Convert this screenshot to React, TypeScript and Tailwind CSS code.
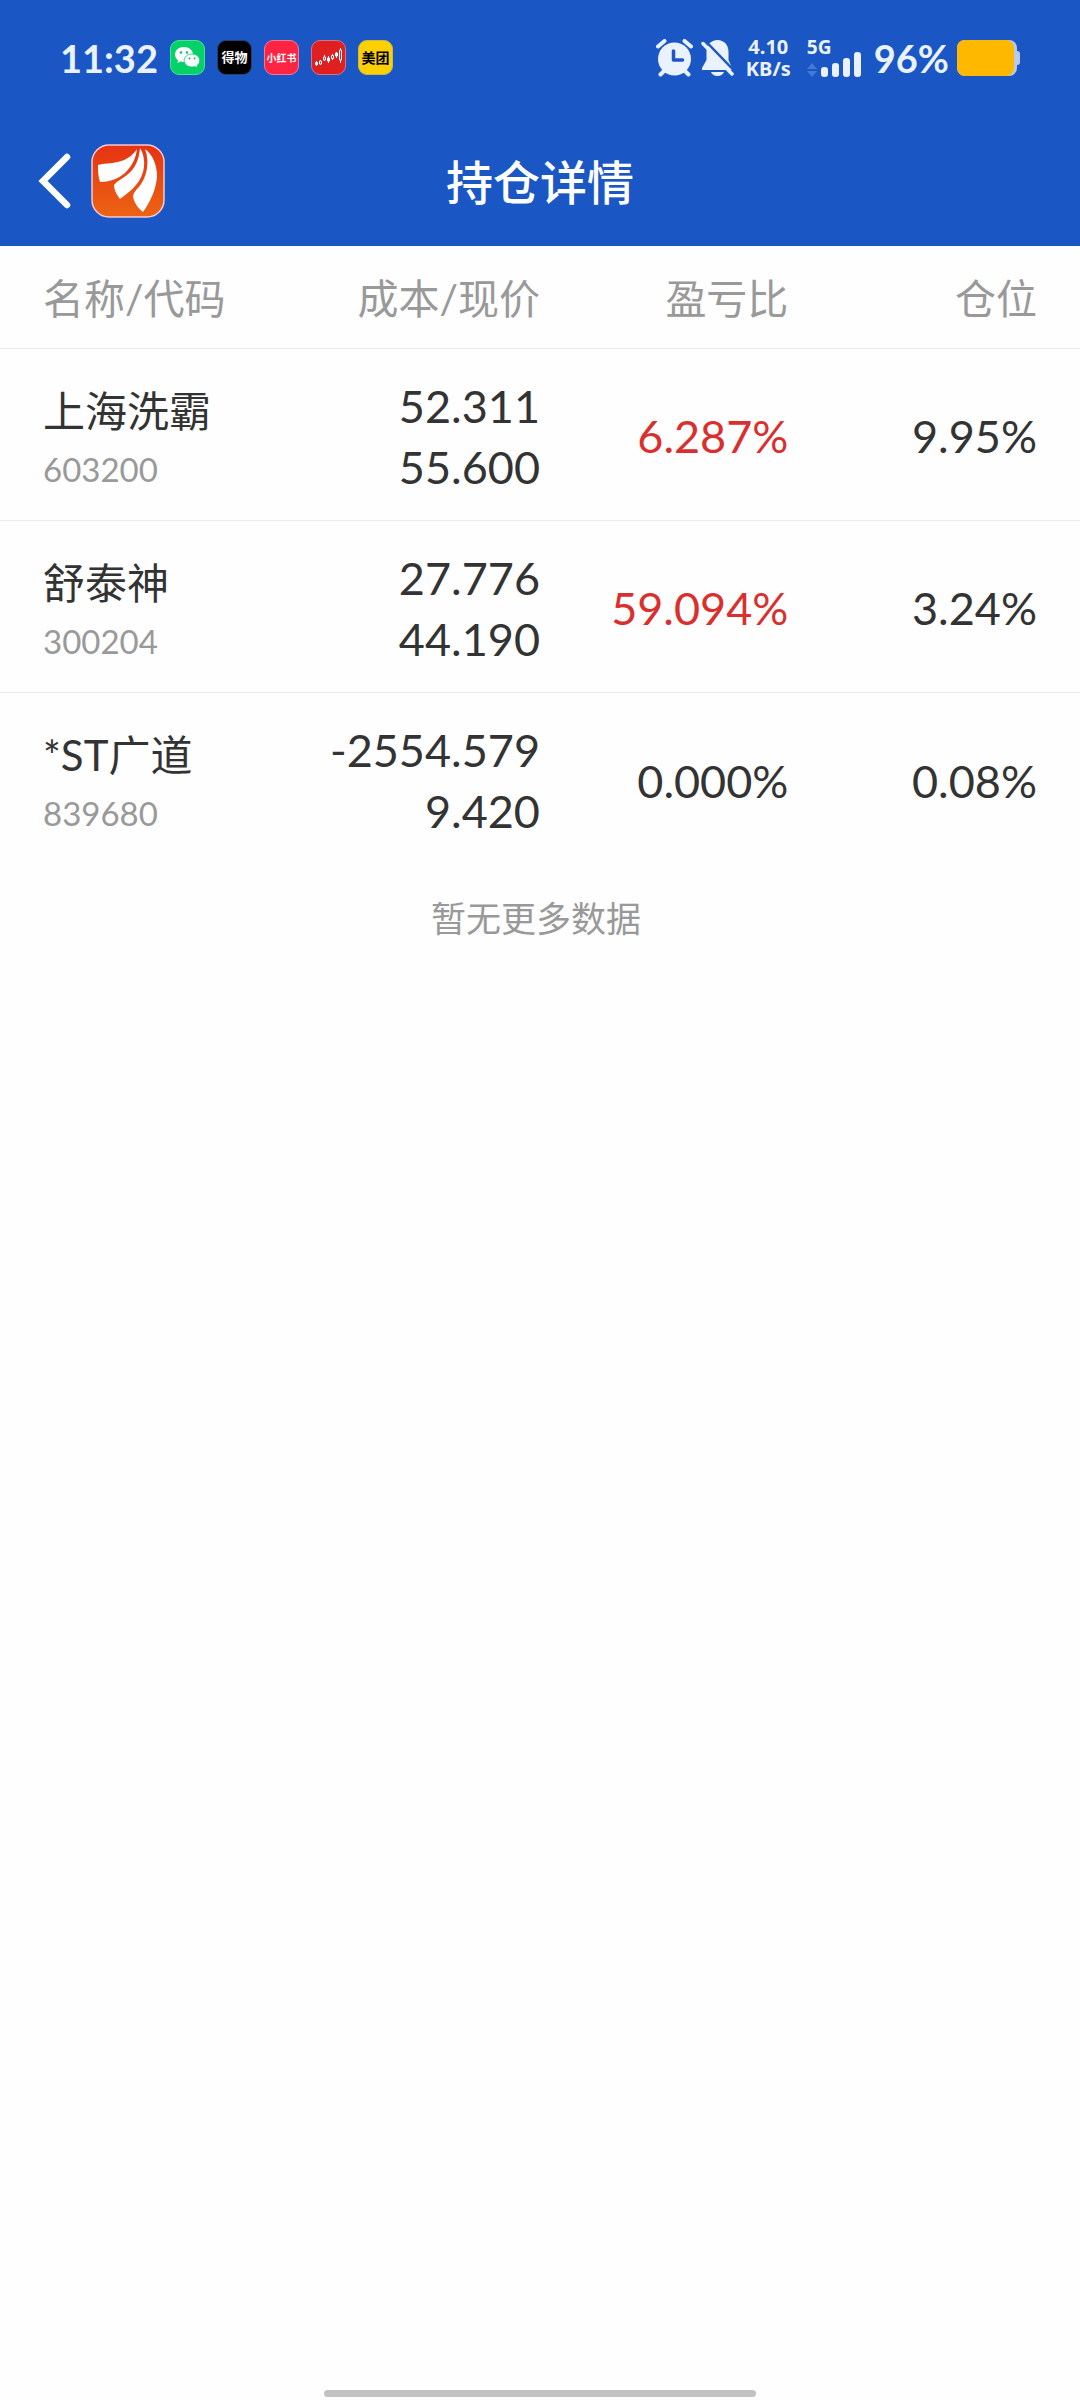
import { ReactNode } from 'react'

interface Holding {
  name: string
  code: string
  cost: string
  price: string
  ratio: string
  position: string
  gain: boolean
}

const holdings: Holding[] = [
  { name: '上海洗霸', code: '603200', cost: '52.311', price: '55.600', ratio: '6.287%', position: '9.95%', gain: true },
  { name: '舒泰神', code: '300204', cost: '27.776', price: '44.190', ratio: '59.094%', position: '3.24%', gain: true },
  { name: '*ST广道', code: '839680', cost: '-2554.579', price: '9.420', ratio: '0.000%', position: '0.08%', gain: false },
]

export default function App() {
  return (
    <div className="flex min-h-screen flex-col bg-[#fefefe] font-[Lato,'Noto_Sans_CJK_SC',sans-serif] text-[#333333]">
      <header className="bg-[#1a57c4] text-white">
        <StatusBar />
        <NavBar />
      </header>

      <main className="flex-1">
        <HoldingsTable />
        <p className="pt-7 pr-2 text-center text-[35px] leading-[52px] text-[#999999]">暂无更多数据</p>
      </main>

      <footer className="flex justify-center pb-[3px]">
        <div className="h-[7px] w-2/5 rounded-full bg-[#c2c2c2]" />
      </footer>
    </div>
  )
}

function StatusBar() {
  return (
    <div className="flex h-[115px] items-center justify-between px-[60px] text-[#eaf1ff]">
      <div className="flex items-center gap-3">
        <span className="text-[38px] leading-none font-bold">11:32</span>
        <AppBadge className="border-[#4fe08d] bg-[#06d168]">
          <WeChatIcon />
        </AppBadge>
        <AppBadge className="border-[#2b3f68] bg-black text-[13px] text-white">得物</AppBadge>
        <AppBadge className="border-[#f0789a] bg-[#ff2442] text-[10px] text-white">小红书</AppBadge>
        <AppBadge className="border-[#d8708c] bg-[#e02020]">
          <CandlesIcon />
        </AppBadge>
        <AppBadge className="border-[#c9b94a] bg-[#ffd000] text-[14px] text-black">美团</AppBadge>
      </div>

      <div className="flex items-center">
        <AlarmIcon />
        <BellOffIcon />
        <div className="ml-3 text-center font-['Noto_Sans',sans-serif] text-[20px] leading-[22px] font-bold">
          <div>4.10</div>
          <div>KB/s</div>
        </div>
        <SignalIcon />
        <span className="ml-3 text-[38px] leading-none font-bold">96%</span>
        <BatteryIcon />
      </div>
    </div>
  )
}

function AppBadge({ className, children }: { className: string; children: ReactNode }) {
  return (
    <span
      className={`flex size-[35px] items-center justify-center overflow-hidden rounded-[9px] border leading-none font-bold whitespace-nowrap ${className}`}
    >
      {children}
    </span>
  )
}

function NavBar() {
  return (
    <nav className="grid h-[131px] grid-cols-[1fr_auto_1fr] items-center px-[38px]">
      <div className="flex items-center gap-5">
        <button type="button" aria-label="返回">
          <svg width="33" height="56" viewBox="0 0 33 56" fill="none">
            <path d="M29 4L5 28l24 24" stroke="#fff" strokeWidth="6.5" strokeLinecap="round" strokeLinejoin="miter" />
          </svg>
        </button>
        <BrandLogo />
      </div>
      <h1 className="pt-1 text-[47px] leading-none font-medium">持仓详情</h1>
    </nav>
  )
}

function HoldingsTable() {
  return (
    <table className="w-full table-fixed border-collapse">
      <thead>
        <tr className="h-[102px] border-b border-[#ebebeb] text-[41px] leading-none text-[#999999]">
          <th scope="col" className="w-[27%] pt-1 pl-[43px] text-left font-normal">名称/代码</th>
          <th scope="col" className="w-[23%] pt-1 text-right font-normal whitespace-nowrap">成本/现价</th>
          <th scope="col" className="w-[23%] pt-1 text-right font-normal">盈亏比</th>
          <th scope="col" className="w-[27%] pt-1 pr-[43px] text-right font-normal">仓位</th>
        </tr>
      </thead>
      <tbody>
        {holdings.map((item) => (
          <tr key={item.code} className="h-[172px] border-b border-[#ebebeb] text-[45px] last:border-0">
            <td className="pt-3 pl-[43px]">
              <div className="text-[42px] leading-[58px]">{item.name}</div>
              <div className="text-[33px] leading-[58px] text-[#999999]">{item.code}</div>
            </td>
            <td className="pt-1.5 text-right leading-[61px]">
              <div>{item.cost}</div>
              <div>{item.price}</div>
            </td>
            <td className={item.gain ? 'pt-1.5 text-right text-[#d9302f]' : 'pt-1.5 text-right'}>{item.ratio}</td>
            <td className="pt-1.5 pr-[43px] text-right">{item.position}</td>
          </tr>
        ))}
      </tbody>
    </table>
  )
}

function BrandLogo() {
  return (
    <svg width="74" height="74" viewBox="0 0 74 74">
      <defs>
        <linearGradient id="brand" x1="0" y1="0" x2="0" y2="1">
          <stop offset="0" stopColor="#e63312" />
          <stop offset="1" stopColor="#ec6413" />
        </linearGradient>
      </defs>
      <rect x="1" y="1" width="72" height="72" rx="17" fill="url(#brand)" stroke="#f3c9d2" strokeWidth="1.5" />
      <path d="M46 5C42 11 36 16 27 18C19 20 13 19 7 21C7 27 7 32 9 38C18 38 27 35 34 29C41 22 45 14 46 5Z" fill="#fff" />
      <path d="M49 4C48 16 44 25 36 31C31 35 26 37 23 41C23 46 26 51 29 55C34 51 40 47 45 41C54 31 56 15 49 4Z" fill="#fff" />
      <path d="M54 5C59 18 56 33 48 43C45 46 43 48 42 52C43 59 47 64 52 68C59 58 65 46 66 33C66 21 62 11 54 5Z" fill="#fff" />
    </svg>
  )
}

function WeChatIcon() {
  return (
    <svg width="27" height="23" viewBox="0 0 27 23">
      <path d="M10 1C4.600 1 1 4.500 1 8.500c0 2.500 1.300 4.500 3.200 5.900L3.400 17l3.200-1.600c1 .3 2.200.5 3.400.5 5 0 9-3.200 9-7.400S15 1 10 1Z" fill="#fff" />
      <path d="M18 8c-4.500 0-7.800 2.900-7.800 6.500S13.500 21 18 21c1 0 2-.2 2.800-.4l2.700 1.400-.7-2.200c1.700-1.200 2.900-3.100 2.900-5.300C25.700 10.900 22.500 8 18 8Z" fill="#fff" stroke="#06d168" strokeWidth=".8" />
      <circle cx="7" cy="6.500" r="1.200" fill="#06c160" />
      <circle cx="13" cy="6.500" r="1.200" fill="#06c160" />
      <circle cx="15.500" cy="12.500" r="1" fill="#06c160" />
      <circle cx="20.500" cy="12.500" r="1" fill="#06c160" />
    </svg>
  )
}

function CandlesIcon() {
  return (
    <svg width="29" height="20" viewBox="0 0 29 20" fill="none" stroke="#fff">
      <path d="M2.500 13v5M6.500 12v5M10.500 7v6M14.500 8v7M18.500 6v6M22.500 4v6M26.500 0v15" />
      <path d="M1.500 14.500h2v2h-2zM13.500 10h2v3h-2zM21.500 5h2v3h-2z" fill="#fff" />
      <path d="M5.500 13h2v3h-2zM9.500 9h2v3h-2zM17.500 7.500h2v3h-2zM25.500 2h2v10h-2z" fill="#e02020" />
    </svg>
  )
}

function AlarmIcon() {
  return (
    <svg width="37" height="38" viewBox="0 0 37 38" fill="none">
      <circle cx="18.500" cy="20" r="16.500" fill="#eaf1ff" />
      <path d="M2 7.500L8.500 2M35 7.500L28.500 2M4.500 35.500l4-4M32.500 35.500l-4-4" stroke="#eaf1ff" strokeWidth="4" strokeLinecap="round" />
      <path d="M17.500 12v9h9" stroke="#1a57c4" strokeWidth="3.500" strokeLinejoin="round" strokeLinecap="round" />
    </svg>
  )
}

function BellOffIcon() {
  return (
    <svg className="ml-2" width="33" height="38" viewBox="0 0 33 38">
      <path d="M16.500 1C10 1 5.500 6 5.500 12.500V21L1 29v2h30v-2l-3.500-8v-8.500C27.500 6 23 1 16.500 1Z" fill="#eaf1ff" />
      <path d="M10 33h13c-1 2.500-3.500 4-6.500 4s-5.500-1.500-6.500-4Z" fill="#eaf1ff" />
      <path d="M4 1.500l30 31" stroke="#1a57c4" strokeWidth="2.500" />
      <path d="M2 4.500l29 30.500" stroke="#eaf1ff" strokeWidth="3.500" strokeLinecap="round" />
    </svg>
  )
}

function SignalIcon() {
  return (
    <div className="ml-4 flex flex-col">
      <span className="font-['Noto_Sans',sans-serif] text-[19px] leading-[16px] font-bold">5G</span>
      <svg className="-mt-1" width="55" height="26" viewBox="0 0 55 26">
        <path d="M0 18l5-6 5 6zM0 20l5 6 5-6z" fill="#4578d6" />
        <rect x="14" y="16" width="7" height="10" rx="3" fill="#eaf1ff" />
        <rect x="25" y="12" width="7" height="14" rx="3" fill="#eaf1ff" />
        <rect x="36" y="7" width="7" height="19" rx="3" fill="#eaf1ff" />
        <rect x="47" y="1" width="7" height="25" rx="3" fill="#eaf1ff" />
      </svg>
    </div>
  )
}

function BatteryIcon() {
  return (
    <svg className="ml-2" width="63" height="36" viewBox="0 0 63 36">
      <rect x="56" y="11" width="7" height="14" rx="3" fill="#b9c9ec" />
      <rect x="0" y="0" width="60" height="36" rx="8" fill="#b9c9ec" />
      <path d="M8 0h41a8 8 0 0 1 8 8v20a8 8 0 0 1-8 8H8a8 8 0 0 1-8-8V8a8 8 0 0 1 8-8Z" fill="#ffb800" />
    </svg>
  )
}
